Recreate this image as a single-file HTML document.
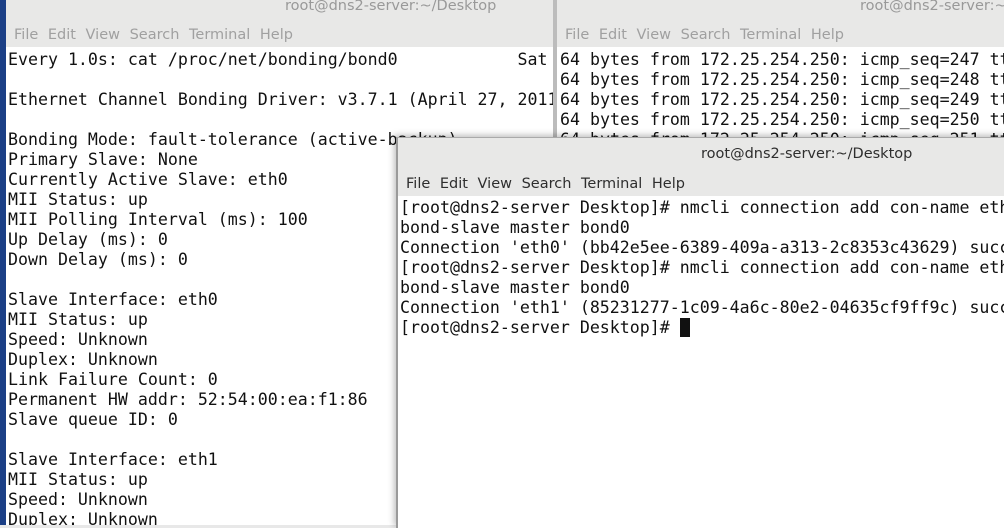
<!DOCTYPE html>
<html><head><style>
body{margin:0;width:1004px;height:525px;overflow:hidden;position:relative;background:#e8e8e8;font-family:"DejaVu Sans","Liberation Sans",sans-serif}
.win{position:absolute;background:#fff;overflow:hidden}
.tb{position:absolute;left:0;right:0;top:0;background:#e8e8e7;color:#999;font-size:14.5px;white-space:nowrap}
.mb{position:absolute;left:0;right:0;background:#e8e8e7;font-size:14.5px;color:#a0a0a0;white-space:nowrap;word-spacing:5px}
pre{position:absolute;margin:0;font-family:"DejaVu Sans Mono","Liberation Mono",monospace;font-size:16.6px;line-height:20px;color:#111;white-space:pre}
</style></head><body>
<div style="position:absolute;left:0;top:0;width:6px;height:525px;background:#1b3f86"></div>
<div class="win" style="left:6px;top:0;width:547px;height:525px">
 <div class="tb" style="height:25px;line-height:12px;padding-left:279px;width:547px;box-sizing:border-box">root@dns2-server:~/Desktop</div>
 <div class="mb" style="top:25px;height:22px;line-height:20px;padding-left:8px">File Edit View Search Terminal Help</div>
 <pre style="left:2px;top:50px">Every 1.0s: cat /proc/net/bonding/bond0            Sat

Ethernet Channel Bonding Driver: v3.7.1 (April 27, 2011

Bonding Mode: fault-tolerance (active-backup)
Primary Slave: None
Currently Active Slave: eth0
MII Status: up
MII Polling Interval (ms): 100
Up Delay (ms): 0
Down Delay (ms): 0

Slave Interface: eth0
MII Status: up
Speed: Unknown
Duplex: Unknown
Link Failure Count: 0
Permanent HW addr: 52:54:00:ea:f1:86
Slave queue ID: 0

Slave Interface: eth1
MII Status: up
Speed: Unknown
Duplex: Unknown</pre>
</div>
<div style="position:absolute;left:553px;top:0;width:4px;height:525px;background:#bcbcbc"></div>
<div class="win" style="left:557px;top:0;width:447px;height:525px">
 <div class="tb" style="height:25px;line-height:12px;padding-left:303px;box-sizing:border-box">root@dns2-server:~/Desktop</div>
 <div class="mb" style="top:25px;height:22px;line-height:20px;padding-left:8px">File Edit View Search Terminal Help</div>
 <pre style="left:3px;top:50px">64 bytes from 172.25.254.250: icmp_seq=247 tt
64 bytes from 172.25.254.250: icmp_seq=248 tt
64 bytes from 172.25.254.250: icmp_seq=249 tt
64 bytes from 172.25.254.250: icmp_seq=250 tt
64 bytes from 172.25.254.250: icmp_seq=251 tt</pre>
</div>
<div class="win" style="left:396px;top:137px;width:610px;height:390px;border-left:2px solid #9a9a9a;border-top:1px solid #aaa;box-shadow:-2px -2px 6px rgba(0,0,0,.25)">
 <div class="tb" style="height:58px;color:#2e2e2e;line-height:32px;padding-left:303px;box-sizing:border-box">root@dns2-server:~/Desktop</div>
 <div class="mb" style="top:34px;height:24px;line-height:24px;padding-left:8px;color:#2e2e2e">File Edit View Search Terminal Help</div>
 <pre style="left:2px;top:60px">[root@dns2-server Desktop]# nmcli connection add con-name eth
bond-slave master bond0
Connection 'eth0' (bb42e5ee-6389-409a-a313-2c8353c43629) succ
[root@dns2-server Desktop]# nmcli connection add con-name eth
bond-slave master bond0
Connection 'eth1' (85231277-1c09-4a6c-80e2-04635cf9ff9c) succ
[root@dns2-server Desktop]# <span style="background:#111">&nbsp;</span></pre>
</div>
</body></html>
